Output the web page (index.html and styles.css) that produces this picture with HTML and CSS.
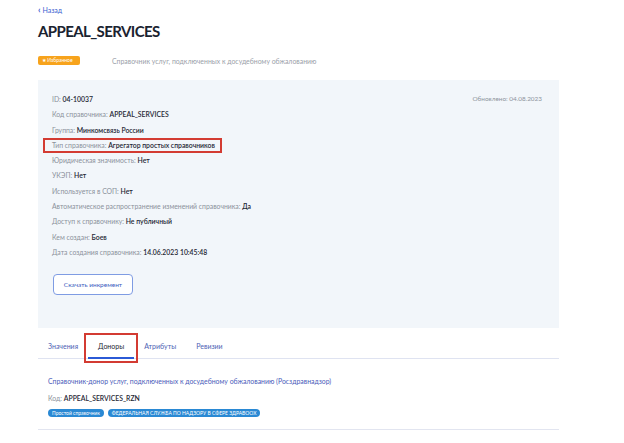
FILE: index.html
```html
<!DOCTYPE html>
<html lang="ru">
<head>
  <meta charset="UTF-8">
  <title>APPEAL_SERVICES</title>
  <link rel="stylesheet" href="styles.css">
</head>
<body>
  <div class="page">
    <a class="back" href="#"><span class="chev">‹</span> Назад</a>
    <h1>APPEAL_SERVICES</h1>

    <div class="sub">
      <span class="fav">★ Избранное</span>
      <span class="desc">Справочник услуг, подключенных к досудебному обжалованию</span>
    </div>

    <section class="info">
      <div class="updated">Обновлено: 04.08.2023</div>
      <div class="row"><span class="lbl">ID:</span> <b>04-10037</b></div>
      <div class="row"><span class="lbl">Код справочника:</span> <b>APPEAL_SERVICES</b></div>
      <div class="row"><span class="lbl">Группа:</span> <b>Минкомсвязь России</b></div>
      <div class="row"><span class="marked"><span class="lbl">Тип справочника:</span> <b>Агрегатор простых справочников</b></span></div>
      <div class="row"><span class="lbl">Юридическая значимость:</span> <b>Нет</b></div>
      <div class="row"><span class="lbl">УКЭП:</span> <b>Нет</b></div>
      <div class="row"><span class="lbl">Используется в СОП:</span> <b>Нет</b></div>
      <div class="row"><span class="lbl">Автоматическое распространение изменений справочника:</span> <b>Да</b></div>
      <div class="row"><span class="lbl">Доступ к справочнику:</span> <b>Не публичный</b></div>
      <div class="row"><span class="lbl">Кем создан:</span> <b>Боев</b></div>
      <div class="row"><span class="lbl">Дата создания справочника:</span> <b>14.06.2023 10:45:48</b></div>
      <button class="btn">Скачать инкремент</button>
    </section>

    <nav class="tabs">
      <a class="tab" href="#">Значения</a>
      <a class="tab active" href="#">Доноры</a>
      <a class="tab" href="#">Атрибуты</a>
      <a class="tab" href="#">Ревизии</a>
    </nav>

    <div class="donor">
      <a class="donor-name" href="#">Справочник-донор услуг, подключенных к досудебному обжалованию (Росздравнадзор)</a>
      <div class="row"><span class="lbl">Код:</span> <b>APPEAL_SERVICES_RZN</b></div>
      <div class="tags">
        <span class="tag">Простой справочник</span>
        <span class="tag">ФЕДЕРАЛЬНАЯ СЛУЖБА ПО НАДЗОРУ В СФЕРЕ ЗДРАВООХ</span>
      </div>
    </div>
  </div>
</body>
</html>
```

FILE: styles.css
```css
body {
  margin: 0;
  font-family: Lato, "Noto Sans", sans-serif;
  background: #fff;
  color: #1d2633;
}
.page {
  width: 521px;
  padding: 5px 0 0 38px;
}
.back {
  display: block;
  font-size: 7px;
  line-height: 10px;
  color: #3b5ed0;
  text-decoration: none;
}
.chev {
  font-size: 9px;
  font-weight: bold;
}
h1 {
  margin: 6px 0 0;
  font-size: 15px;
  letter-spacing: -0.6px;
  line-height: 20px;
  font-weight: 700;
  color: #1a2330;
}
.sub {
  display: flex;
  align-items: center;
  gap: 32px;
  margin-top: 14px;
  height: 11px;
}
.fav {
  background: #f7a31c;
  color: #fff;
  font-size: 5px;
  line-height: 9px;
  padding: 0 4px;
  border-radius: 2px;
  width: 34px;
}
.desc {
  font-size: 6.9px;
  color: #9aa0a9;
}
.info {
  margin-top: 14px;
  background: #f2f6fa;
  padding: 12px 17px 33px 14px;
  position: relative;
}
.updated {
  position: absolute;
  right: 17px;
  top: 15px;
  font-size: 6.4px;
  color: #8d939c;
}
.row {
  font-size: 6.85px;
  line-height: 15.3px;
}
.lbl {
  color: #8b919a;
}
.row b {
  font-weight: 600;
  color: #1f2835;
}
.marked {
  display: inline-block;
  line-height: 9px;
  padding: 1px 5px 1px 7px;
  margin: 0 -5px 0 -7px;
  outline: 2px solid #d33b32;
}
.btn {
  display: block;
  margin: 14px 0 0 1px;
  width: 80px;
  height: 21px;
  border: 1px solid #7f9ce3;
  border-radius: 4px;
  background: #fff;
  color: #3d5cc0;
  font-family: inherit;
  font-size: 6.5px;
  padding: 0;
}
.tabs {
  display: flex;
  margin-top: 9px;
  border-bottom: 1.5px solid #dfe3f1;
}
.tab {
  padding: 0 10px;
  font-size: 7px;
  line-height: 18px;
  height: 20px;
  color: #4d62b4;
  text-decoration: none;
  border-bottom: 2px solid transparent;
  margin-bottom: -1.5px;
}
.tab.active {
  color: #1d2633;
  border-bottom-color: #2b5ad6;
  outline: 2px solid #d33b32;
  outline-offset: 2px;
}
.donor {
  padding: 16px 0 12px 10px;
  border-bottom: 1.5px solid #e2e5f0;
}
.donor-name {
  display: block;
  font-size: 6.9px;
  line-height: 12px;
  color: #4a5cba;
  text-decoration: none;
}
.donor .row {
  margin-top: 4px;
}
.tags {
  display: flex;
  gap: 4px;
  margin-top: 3px;
}
.tag {
  background: #2a89d4;
  color: #fff;
  font-size: 5px;
  line-height: 8px;
  padding: 0 4px;
  border-radius: 4px;
  white-space: nowrap;
}
```
